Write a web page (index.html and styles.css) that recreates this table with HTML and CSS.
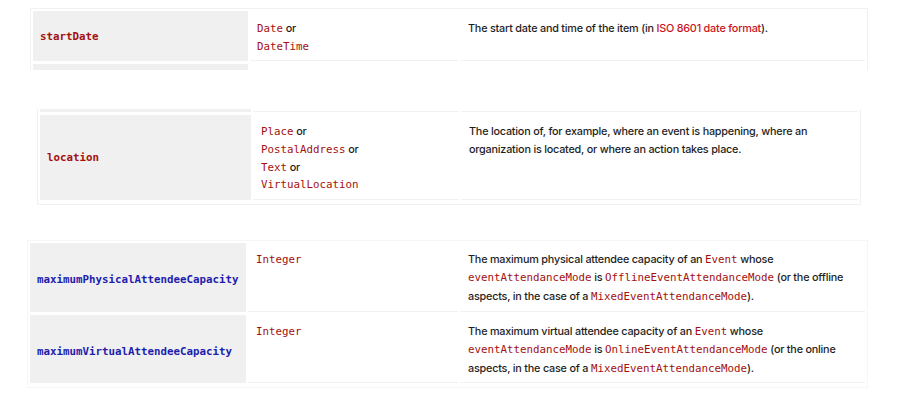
FILE: index.html
```html
<!DOCTYPE html>
<html>
<head>
<meta charset="utf-8">
<link rel="stylesheet" href="styles.css">
</head>
<body>
<div class="snip snip-a">
  <div class="row">
    <div class="name"><code class="prop">startDate</code></div>
    <div class="type"><code>Date</code> or<br><code>DateTime</code></div>
    <div class="desc">The start date and time of the item (in <a class="link">ISO 8601 date format</a>).</div>
  </div>
  <div class="row">
    <div class="name"><code class="prop">endDate</code></div>
    <div class="type"><code>Date</code> or<br><code>DateTime</code></div>
    <div class="desc">The end date and time of the item.</div>
  </div>
</div>

<div class="snip snip-b">
  <div class="row stub">
    <div class="name"></div>
    <div class="type"></div>
    <div class="desc"></div>
  </div>
  <div class="row">
    <div class="name"><code class="prop">location</code></div>
    <div class="type"><code>Place</code> or<br><code>PostalAddress</code> or<br><code>Text</code> or<br><code>VirtualLocation</code></div>
    <div class="desc">The location of, for example, where an event is happening, where an organization is located, or where an action takes place.</div>
  </div>
</div>

<div class="snip snip-c">
  <div class="row">
    <div class="name"><code class="prop blue">maximumPhysicalAttendeeCapacity</code></div>
    <div class="type"><code>Integer</code></div>
    <div class="desc">The maximum physical attendee capacity of an <code>Event</code> whose <code>eventAttendanceMode</code> is <code>OfflineEventAttendanceMode</code> (or the offline aspects, in the case of a <code>MixedEventAttendanceMode</code>).</div>
  </div>
  <div class="row">
    <div class="name"><code class="prop blue">maximumVirtualAttendeeCapacity</code></div>
    <div class="type"><code>Integer</code></div>
    <div class="desc">The maximum virtual attendee capacity of an <code>Event</code> whose <code>eventAttendanceMode</code> is <code>OnlineEventAttendanceMode</code> (or the online aspects, in the case of a <code>MixedEventAttendanceMode</code>).</div>
  </div>
</div>
</body>
</html>
```
FILE: styles.css
```css
html, body {
  margin: 0;
  padding: 0;
  background: #ffffff;
}
body {
  font-family: Inter, "Noto Sans", sans-serif;
  font-size: 10.8px;
  font-weight: 500;
  color: #1e1e1e;
  letter-spacing: -0.2px;
}
.snip {
  box-sizing: border-box;
  border: 1px solid #f1f1f1;
  padding: 2px 2px 4px;
  display: flex;
  flex-direction: column;
  gap: 3px;
  overflow: hidden;
}
.row {
  display: grid;
  grid-template-columns: var(--c1) var(--c2) 1fr;
  column-gap: 2px;
}
.name {
  background: #f0f0f0;
  display: flex;
  align-items: center;
  padding-left: 7px;
  padding-top: 3px;
}
.type, .desc {
  padding: 9px 8px 4px;
  line-height: 18px;
  border-bottom: 1px solid #f1f1f1;
}
.type {
  padding-left: var(--p2);
}
code {
  font-family: "DejaVu Sans Mono", "Liberation Mono", monospace;
  font-size: 10.8px;
  font-weight: normal;
  line-height: 1;
  letter-spacing: 0;
  color: #a3100f;
}
.prop {
  font-weight: bold;
  color: #a3100f;
}
.prop.blue {
  color: #1d1dae;
}
.link {
  color: #c8141c;
}
.snip-a {
  margin: 8px 0 0 30px;
  width: 838px;
  height: 62px;
  padding-bottom: 0;
  border-bottom: none;
  --c1: 215px;
  --c2: 208px;
  --p2: 7px;
}
.snip-a .row {
  height: 50px;
}
.snip-b {
  margin: 39px 0 0 37px;
  width: 824px;
  border-top: none;
  padding-top: 0;
  --c1: 211px;
  --c2: 206px;
  --p2: 8px;
}
.snip-b .row {
  min-height: 85px;
}
.snip-b .name {
  padding-top: 2px;
}
.snip-b .type, .snip-b .desc {
  line-height: 17.75px;
  padding-top: 8px;
  padding-bottom: 3px;
}
.stub {
  height: 3px;
}
.snip-b .stub {
  min-height: 0;
}
.stub .type, .stub .desc {
  padding: 0;
}
.snip-b .stub .name {
  padding: 0;
}
.snip-c {
  margin: 35px 0 0 27px;
  width: 841px;
  border-color: #f6f6f6;
  --c1: 216px;
  --c2: 210px;
  --p2: 8px;
}
.snip-c .row {
  height: 69px;
}
.snip-c .row + .row {
  height: 68px;
}
.snip-c .name {
  padding-top: 6px;
}
.snip-c .type, .snip-c .desc {
  line-height: 18.4px;
  padding-top: 8px;
  padding-bottom: 2px;
}
.name .prop {
  font-size: 10.8px;
}
```
